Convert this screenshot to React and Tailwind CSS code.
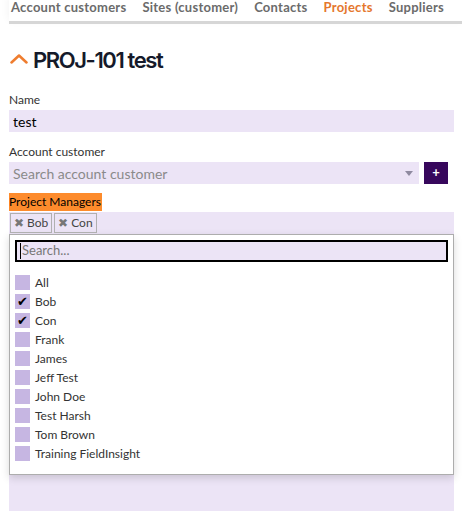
const tabs = ["Account customers", "Sites (customer)", "Contacts", "Projects", "Suppliers"];
const people = ["Bob", "Con", "Frank", "James", "Jeff Test", "John Doe", "Test Harsh", "Tom Brown", "Training FieldInsight"];
const selected = ["Bob", "Con"];

export default function App() {
  return (
    <div className="w-[462px] h-[521px] overflow-hidden bg-white font-['Lato',sans-serif]">
      {/* top nav */}
      <div className="ml-[9px] h-[24px] border-b-[3px] border-[#d6d6d6] flex items-start gap-[16px] pl-[2px] shadow-[0_-4px_10px_rgba(0,0,0,0.06)]">
        {tabs.map((t) => (
          <span
            key={t}
            className={`text-[13px] font-bold leading-[15px] tracking-[0.25px] ${t === "Projects" ? "text-[#e5772d]" : "text-[#6b6b6b]"}`}
          >
            {t}
          </span>
        ))}
      </div>

      <div className="pl-[9px] w-[454px]">
        {/* heading */}
        <div className="flex items-center mt-[23px] h-[26px]">
          <svg width="18" height="10" viewBox="0 0 18 10" className="ml-[1px] mr-[5px] -mt-[2px]">
            <polyline points="1.5,8.5 9,1.5 16.5,8.5" fill="none" stroke="#ef7d2f" strokeWidth="2.5" strokeLinecap="round" strokeLinejoin="round" />
          </svg>
          <h1 className="text-[22px] font-semibold text-[#151a2a] tracking-[-1.4px] font-['Inter',sans-serif]">PROJ-101 test</h1>
        </div>

        {/* name */}
        <div className="mt-[20px] text-[12px] leading-[14px] text-[#333]">Name</div>
        <div className="mt-[3px] h-[22px] bg-[#ece4f6] flex items-center px-[4px] text-[14px] text-black">test</div>

        {/* account customer */}
        <div className="mt-[13px] text-[12px] leading-[14px] text-[#333]">Account customer</div>
        <div className="mt-[3px] flex items-center">
          <div className="h-[22px] w-[410px] bg-[#ece4f6] flex items-center justify-between px-[4px]">
            <span className="text-[14px] text-[#8a8a8a]">Search account customer</span>
            <span className="w-0 h-0 border-l-[4px] border-r-[4px] border-t-[5px] border-l-transparent border-r-transparent border-t-[#8f8aa0] mr-[2px]" />
          </div>
          <div className="ml-[5px] w-[24px] h-[22px] bg-[#37075c] flex items-center justify-center text-white text-[13px] font-bold">+</div>
        </div>

        {/* project managers */}
        <div className="mt-[9px] inline-block bg-[#fd8b2c] text-[12px] leading-[18px] text-black pr-[1px]">Project Managers</div>
        <div className="bg-[#ece4f6] pb-[36px]">
          <div className="flex gap-[2px] pl-[1px] pt-[1px] h-[22px]">
            {selected.map((s) => (
              <span key={s} className="h-[20px] border border-[#b0b0b0] flex items-center px-[3px] gap-[3px] text-[12px] text-[#444]">
                <span className="text-[12px] text-[#777]">✖</span>
                {s}
              </span>
            ))}
          </div>
          <div className="bg-white border border-[#adadad] shadow-[0_3px_8px_rgba(0,0,0,0.15)] px-[5px] pt-[5px] pb-[13px]">
            <div className="h-[22px] border-2 border-black bg-[#ece4f6] flex items-center pl-[3px]">
              <span className="w-[1px] h-[16px] bg-black" />
              <span className="text-[13px] text-[#777] ml-[1px]">Search...</span>
            </div>
            <div className="mt-[13px] flex flex-col gap-[4px]">
              {["All", ...people].map((p) => (
                <div key={p} className="flex items-center h-[15px] gap-[5px]">
                  <span className="w-[15px] h-[15px] bg-[#c6b6e2] flex items-center justify-center text-[13px] text-black leading-none">
                    {selected.includes(p) ? "✔" : ""}
                  </span>
                  <span className="text-[12px] text-[#333]">{p}</span>
                </div>
              ))}
            </div>
          </div>
        </div>
      </div>
    </div>
  );
}
